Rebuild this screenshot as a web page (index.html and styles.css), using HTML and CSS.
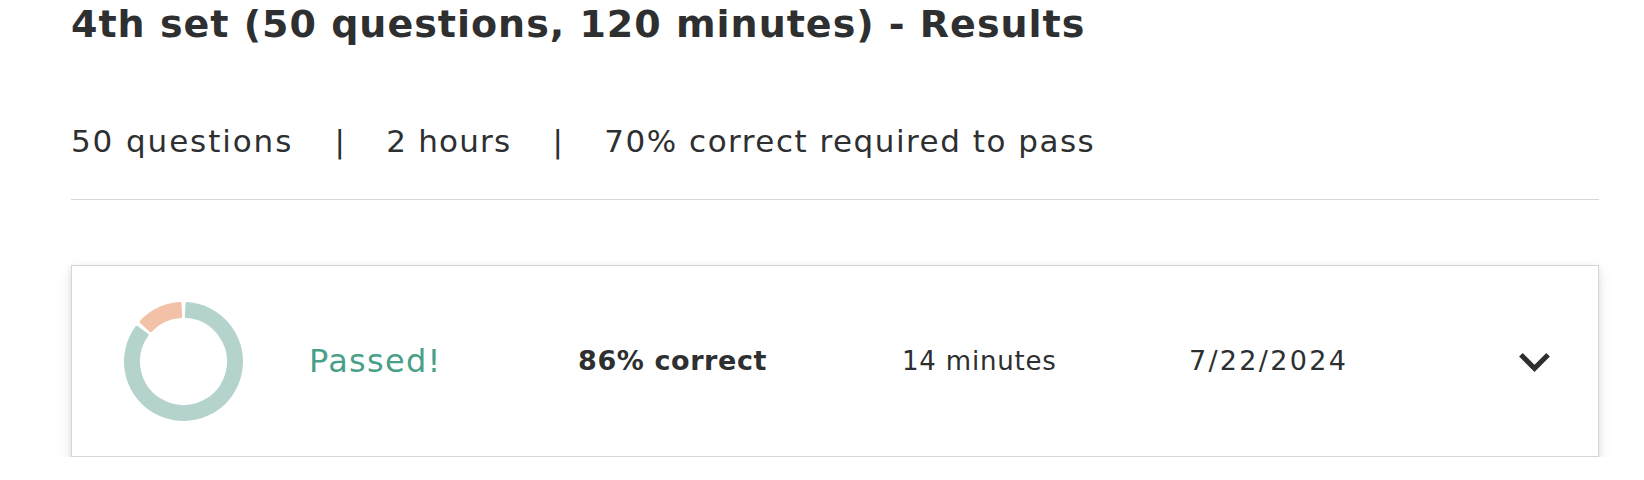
FILE: index.html
```html
<!DOCTYPE html>
<html lang="en">
<head>
<meta charset="utf-8">
<title>4th set - Results</title>
<link rel="stylesheet" href="styles.css">
</head>
<body>
<main class="page">
  <h1 class="title">4th set (50 questions, 120 minutes) - Results</h1>
  <div class="meta">
    <span class="meta-item meta-item-wide">50 questions</span>
    <span class="meta-sep">|</span>
    <span class="meta-item meta-item-tight">2 hours</span>
    <span class="meta-sep">|</span>
    <span class="meta-item">70% correct required to pass</span>
  </div>
  <section class="attempt">
    <div class="donut-col">
      <svg class="donut" width="119" height="119" viewBox="0 0 119 119" aria-hidden="true">
        <path class="seg-ok" d="M 63.041 1.608 A 58 58 0 1 1 12.637 25.326 L 23.140 32.986 A 45 45 0 1 0 62.247 14.584 Z"/>
        <path class="seg-bad" d="M 17.151 19.870 A 58 58 0 0 1 55.959 1.608 L 56.753 14.584 A 45 45 0 0 0 26.643 28.752 Z"/>
      </svg>
    </div>
    <div class="col col-status">Passed!</div>
    <div class="col col-score">86% correct</div>
    <div class="col col-time">14 minutes</div>
    <div class="col col-date">7/22/2024</div>
    <button class="toggle" type="button" aria-label="Expand">
      <svg width="31" height="19" viewBox="6 8.59 12 7.41" aria-hidden="true">
        <path d="M16.59 8.59L12 13.17 7.41 8.59 6 10l6 6 6-6z"/>
      </svg>
    </button>
  </section>
</main>
</body>
</html>
```

FILE: styles.css
```css
html, body {
  margin: 0;
  padding: 0;
  background: #ffffff;
}

body {
  font-family: "DejaVu Sans", "Liberation Sans", Arial, sans-serif;
  color: #2d2f31;
}

.page {
  margin-left: 71px;
  width: 1528px;
}

.title {
  margin: 0;
  font-size: 38px;
  line-height: 49px;
  font-weight: 700;
  letter-spacing: 1px;
  color: #2d2f31;
}

.meta {
  display: flex;
  align-items: baseline;
  margin-top: 72px;
  padding-bottom: 38px;
  border-bottom: 1px solid #d1d7dc;
  font-size: 31px;
  line-height: 40px;
  letter-spacing: 1.5px;
}

.meta-item-wide {
  letter-spacing: 1.9px;
}

.meta-item-tight {
  letter-spacing: 1.2px;
}

.meta-sep {
  width: 93px;
  text-align: center;
  letter-spacing: 0;
}

.attempt {
  display: flex;
  align-items: center;
  box-sizing: border-box;
  height: 192px;
  margin-top: 65px;
  padding: 0 48px 0 52px;
  border: 1px solid #d1d7dc;
  background: #fff;
  box-shadow: 0 2px 6px rgba(0, 0, 0, 0.1), 0 6px 16px rgba(0, 0, 0, 0.08);
}

.donut-col {
  width: 119px;
  height: 119px;
  margin-right: 66px;
}

.donut {
  display: block;
}

.seg-ok {
  fill: #b5d3cd;
  stroke: #b5d3cd;
  stroke-width: 3;
  stroke-linejoin: round;
}

.seg-bad {
  fill: #f3c1a7;
  stroke: #f3c1a7;
  stroke-width: 3;
  stroke-linejoin: round;
}

.col {
  font-size: 26px;
  line-height: 32px;
  white-space: nowrap;
}

.col-status {
  width: 269px;
  font-size: 32px;
  letter-spacing: 1.3px;
  color: #4a9f89;
}

.col-score {
  width: 324px;
  font-size: 27px;
  font-weight: 700;
  letter-spacing: 0.6px;
}

.col-time {
  width: 287px;
  letter-spacing: 0.8px;
}

.col-date {
  flex: 1;
  font-size: 27px;
  letter-spacing: 2.3px;
}

.toggle {
  display: flex;
  align-items: center;
  justify-content: center;
  width: 31px;
  height: 19px;
  padding: 0;
  margin-top: 3px;
  border: 0;
  background: none;
  cursor: pointer;
}

.toggle svg {
  display: block;
  fill: #2d2f31;
}
```
